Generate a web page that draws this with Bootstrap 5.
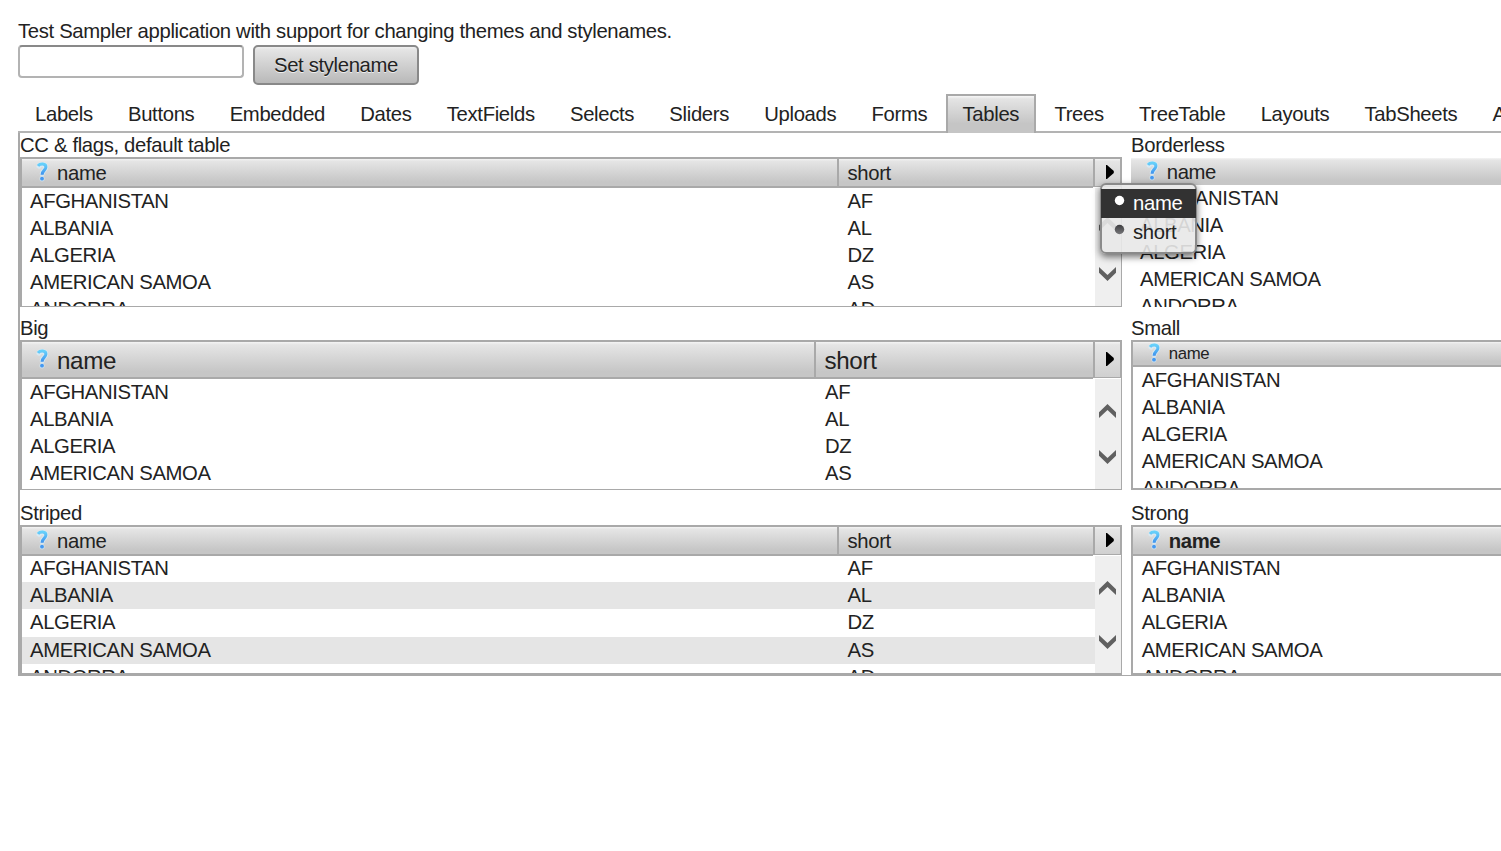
<!DOCTYPE html>
<html lang="en">
<head>
<meta charset="utf-8">
<meta name="viewport" content="width=device-width, initial-scale=1">
<title>Test Sampler</title>
<link href="https://cdn.jsdelivr.net/npm/bootstrap@5.3.0/dist/css/bootstrap.min.css" rel="stylesheet">
<style>
html, body { height: 100%; }
body { font-family: "Liberation Sans", Arial, sans-serif; font-size: 20.3px; letter-spacing: -.34px; line-height: 24px; color: #222; background: #fff; padding: 19px 0 0 18px; overflow: hidden; white-space: nowrap; }
.intro { height: 26px; }
.style-input { width: 226px; height: 33px; border: 2px solid #b3b3b3; border-top-color: #898989; border-radius: 4px; padding: 0 6px; }
.style-btn { width: 166px; height: 40px; border: 2px solid #898989; border-radius: 5px; padding: 0; font-size: inherit; letter-spacing: inherit; line-height: 24px; color: #222; background: linear-gradient(#f0f0f0, #e4e4e4 8%, #b9b9b9); text-shadow: 0 1px 0 #eee; }
.tabs { margin-top: 9px; height: 39px; width: 1483px; border-bottom: 2px solid #b3b3b3; flex-wrap: nowrap; overflow: hidden; }
.tabs .nav-link { height: 39px; flex: none; padding: 8px 17px 0 17px; margin-right: 1.25px; color: #222; font-size: inherit; line-height: 24px; }
.tabs .nav-link.active { border: 2px solid #a9a9a9; border-bottom: 0; padding: 6px 15px 0; background: linear-gradient(#f6f6f6, #e4e4e4 8%, #c5c5c5 75%, #c5c5c5); }
.tabs { height: 39px; overflow: visible; }
.sheet { width: 1483px; height: 543px; border-left: 2px solid #a9a9a9; border-bottom: 1px solid #a9a9a9; }
.col-main { width: 1102px; margin-right: 9px; }
.col-side { width: 370px; }
.grid-block { height: 174px; margin-bottom: 9px; }
.grid-block.big-gap { margin-bottom: 11px; }
.cap { height: 24px; }
.grid-box { height: 150px; border: 2px solid #a9a9a9; border-right-width: 1px; border-bottom-width: 1px; overflow: hidden; }
.col-side .grid-box { border-right: 0; }
.end2 { border-bottom-width: 2px; }
.grid-head { --hh: 29px; height: var(--hh); flex: none; }
.hd { height: var(--hh); border-bottom: 2px solid #a9a9a9; background: linear-gradient(#f4f4f4, #e5e5e5 8%, #c6c6c6 85%, #c6c6c6); display: flex; align-items: center; overflow: hidden; }
.hd-name { flex: none; width: 815px; padding-left: 14px; }
.hd-short { flex: 1; border-left: 2px solid #a9a9a9; padding-left: 8.5px; }
.hd-pick { width: 28px; border-left: 2px solid #a9a9a9; border-right: 1px solid #a9a9a9; border-bottom-width: 1px; height: calc(var(--hh) - 1px); padding: 0 0 2px 11px; background: linear-gradient(#f4f4f4, #e5e5e5 8%, #d0d0d0); }
.qm { width: 13px; height: 20px; margin-right: 8px; position: relative; top: -1px; flex: none; }
.grid-rows { flex: 1; min-width: 0; overflow: hidden; }
.rw { height: 27.2px; line-height: 27px; padding-left: 8px; display: flex; letter-spacing: -.38px; position: relative; top: -.4px; }
.striped .rw, .strong .rw { top: -1px; }
.rw > span:first-child { width: 817.5px; flex: none; }
.big .grid-head { --hh: 37px; }
.big .hd { font-size: 24.2px; padding-top: 3px; }
.big .hd-pick { padding-top: 0; }
.big .hd .qm { top: -2px; }
.big .hd-name { width: 792px; }
.big .rw > span:first-child { width: 795px; }
.striped .rw:nth-child(even) { background: #e5e5e5; }
.bar { width: 26px; flex: none; background: #efefef; }
.bar svg { display: block; margin-left: 4px; }
.col-side .hd { padding-left: 14.7px; }
.col-side .rw { padding-left: 8.7px; }
.plain { border-color: transparent; border-width: 1px 0 0 0; }
.plain .grid-head { --hh: 27px; }
.plain .hd { border-bottom: 0; }
.plain .rw { padding-left: 9px !important; }
.compact .grid-head { --hh: 25px; }
.compact .hd { font-size: 16.8px; }
.strong .hd { font-weight: bold; }
.picker { position: absolute; left: 1100px; top: 183px; width: 97px; height: 71px; border: 2px solid #8a8a8a; border-radius: 6px; background: rgba(232,232,232,.9); box-shadow: 0 3px 7px rgba(0,0,0,.55); padding: 4px 0; z-index: 5; }
.pick-item { height: 29px; line-height: 29px; padding-left: 12px; display: flex; }
.pick-item.on { background: #323232; color: #fff; margin: 0 -1px; padding-left: 13px; }
.pick-item svg { margin: 6px 8px 0 0; flex: none; }
</style>
</head>
<body>
<svg width="0" height="0" class="position-absolute"><defs>
<linearGradient id="blue" x1="0" y1="0" x2="0" y2="1"><stop offset="0" stop-color="#66d0fa"/><stop offset="1" stop-color="#3f92ee"/></linearGradient>
<linearGradient id="dot" x1="0" y1="0" x2="0" y2="1"><stop offset="0" stop-color="#3d3d40"/><stop offset="1" stop-color="#77777a"/></linearGradient>
<symbol id="q" viewBox="0 0 13 20"><g fill="none" stroke="#d5eefb" stroke-width="5" stroke-linecap="round" opacity=".7"><path d="M3 4.200C4 2 9.800 1.700 9.800 5.200 9.800 8.200 6.400 8 6.200 12M6 16.600v.3"/></g><path d="M2 3.900C4 1.400 9.900 1.200 9.900 5 9.900 8.200 6.300 8.200 6.100 12.800" fill="none" stroke="url(#blue)" stroke-width="3"/><circle cx="6" cy="16.700" r="1.900" fill="#4598f0"/></symbol>
<symbol id="tri" viewBox="0 0 8 14"><path d="M0 0h1L7.800 6v2L1 14H0z" fill="#000"/></symbol>
<symbol id="up" viewBox="0 0 17 14"><path d="M0 8.300 8.500 0 17 8.300V14L8.500 6 0 14z" fill="#606060"/></symbol>
<symbol id="down" viewBox="0 0 17 14"><path d="M0 5.700 8.500 14 17 5.700V0L8.500 8 0 0z" fill="#606060"/></symbol>
</defs></svg>

<div class="intro">Test Sampler application with support for changing themes and stylenames.</div>
<div class="d-flex align-items-start">
  <input class="style-input" type="text" aria-label="Stylename">
  <button class="btn style-btn" type="button" style="margin-left:9px">Set stylename</button>
</div>
<nav class="nav tabs">
  <a class="nav-link">Labels</a><a class="nav-link">Buttons</a><a class="nav-link">Embedded</a><a class="nav-link">Dates</a><a class="nav-link">TextFields</a><a class="nav-link">Selects</a><a class="nav-link">Sliders</a><a class="nav-link">Uploads</a><a class="nav-link">Forms</a><a class="nav-link active">Tables</a><a class="nav-link">Trees</a><a class="nav-link">TreeTable</a><a class="nav-link">Layouts</a><a class="nav-link">TabSheets</a><a class="nav-link">A</a>
</nav>

<main class="sheet d-flex">
  <div class="col-main flex-shrink-0">
    <section class="grid-block">
      <div class="cap">CC &amp; flags, default table</div>
      <div class="grid-box d-flex flex-column">
        <div class="grid-head d-flex"><div class="hd hd-name"><svg class="qm"><use href="#q"/></svg>name</div><div class="hd hd-short">short</div><div class="hd hd-pick"><svg width="8" height="14"><use href="#tri"/></svg></div></div>
        <div class="d-flex flex-fill overflow-hidden">
          <div class="grid-rows"><div class="rw"><span>AFGHANISTAN</span><span>AF</span></div><div class="rw"><span>ALBANIA</span><span>AL</span></div><div class="rw"><span>ALGERIA</span><span>DZ</span></div><div class="rw"><span>AMERICAN SAMOA</span><span>AS</span></div><div class="rw"><span>ANDORRA</span><span>AD</span></div></div>
          <div class="bar"><svg width="17" height="14" style="margin-top:29px"><use href="#up"/></svg><svg width="17" height="14" style="margin-top:36px"><use href="#down"/></svg></div>
        </div>
      </div>
    </section>
    <section class="grid-block big-gap big">
      <div class="cap">Big</div>
      <div class="grid-box d-flex flex-column">
        <div class="grid-head d-flex"><div class="hd hd-name"><svg class="qm"><use href="#q"/></svg>name</div><div class="hd hd-short">short</div><div class="hd hd-pick"><svg width="8" height="14"><use href="#tri"/></svg></div></div>
        <div class="d-flex flex-fill overflow-hidden">
          <div class="grid-rows"><div class="rw"><span>AFGHANISTAN</span><span>AF</span></div><div class="rw"><span>ALBANIA</span><span>AL</span></div><div class="rw"><span>ALGERIA</span><span>DZ</span></div><div class="rw"><span>AMERICAN SAMOA</span><span>AS</span></div></div>
          <div class="bar"><svg width="17" height="14" style="margin-top:25px"><use href="#up"/></svg><svg width="17" height="14" style="margin-top:32px"><use href="#down"/></svg></div>
        </div>
      </div>
    </section>
    <section class="grid-block striped">
      <div class="cap">Striped</div>
      <div class="grid-box end2 d-flex flex-column">
        <div class="grid-head d-flex"><div class="hd hd-name"><svg class="qm"><use href="#q"/></svg>name</div><div class="hd hd-short">short</div><div class="hd hd-pick"><svg width="8" height="14"><use href="#tri"/></svg></div></div>
        <div class="d-flex flex-fill overflow-hidden">
          <div class="grid-rows"><div class="rw"><span>AFGHANISTAN</span><span>AF</span></div><div class="rw"><span>ALBANIA</span><span>AL</span></div><div class="rw"><span>ALGERIA</span><span>DZ</span></div><div class="rw"><span>AMERICAN SAMOA</span><span>AS</span></div><div class="rw"><span>ANDORRA</span><span>AD</span></div></div>
          <div class="bar"><svg width="17" height="14" style="margin-top:25px"><use href="#up"/></svg><svg width="17" height="14" style="margin-top:40px"><use href="#down"/></svg></div>
        </div>
      </div>
    </section>
  </div>
  <div class="col-side flex-shrink-0">
    <section class="grid-block">
      <div class="cap">Borderless</div>
      <div class="grid-box plain">
        <div class="grid-head"><div class="hd"><svg class="qm"><use href="#q"/></svg>name</div></div>
        <div class="rw">AFGHANISTAN</div><div class="rw">ALBANIA</div><div class="rw">ALGERIA</div><div class="rw">AMERICAN SAMOA</div><div class="rw">ANDORRA</div>
      </div>
    </section>
    <section class="grid-block big-gap compact">
      <div class="cap">Small</div>
      <div class="grid-box end2">
        <div class="grid-head"><div class="hd"><svg class="qm"><use href="#q"/></svg>name</div></div>
        <div class="rw">AFGHANISTAN</div><div class="rw">ALBANIA</div><div class="rw">ALGERIA</div><div class="rw">AMERICAN SAMOA</div><div class="rw">ANDORRA</div>
      </div>
    </section>
    <section class="grid-block strong">
      <div class="cap">Strong</div>
      <div class="grid-box end2">
        <div class="grid-head"><div class="hd"><svg class="qm"><use href="#q"/></svg>name</div></div>
        <div class="rw">AFGHANISTAN</div><div class="rw">ALBANIA</div><div class="rw">ALGERIA</div><div class="rw">AMERICAN SAMOA</div><div class="rw">ANDORRA</div>
      </div>
    </section>
  </div>
</main>

<div class="picker">
  <div class="pick-item on"><svg width="11" height="11"><circle cx="5.500" cy="5.500" r="4.700" fill="#fff"/></svg>name</div>
  <div class="pick-item"><svg width="11" height="11"><circle cx="5.500" cy="5.500" r="4.700" fill="url(#dot)"/></svg>short</div>
</div>
<script src="https://cdn.jsdelivr.net/npm/bootstrap@5.3.0/dist/js/bootstrap.bundle.min.js"></script>
</body>
</html>
